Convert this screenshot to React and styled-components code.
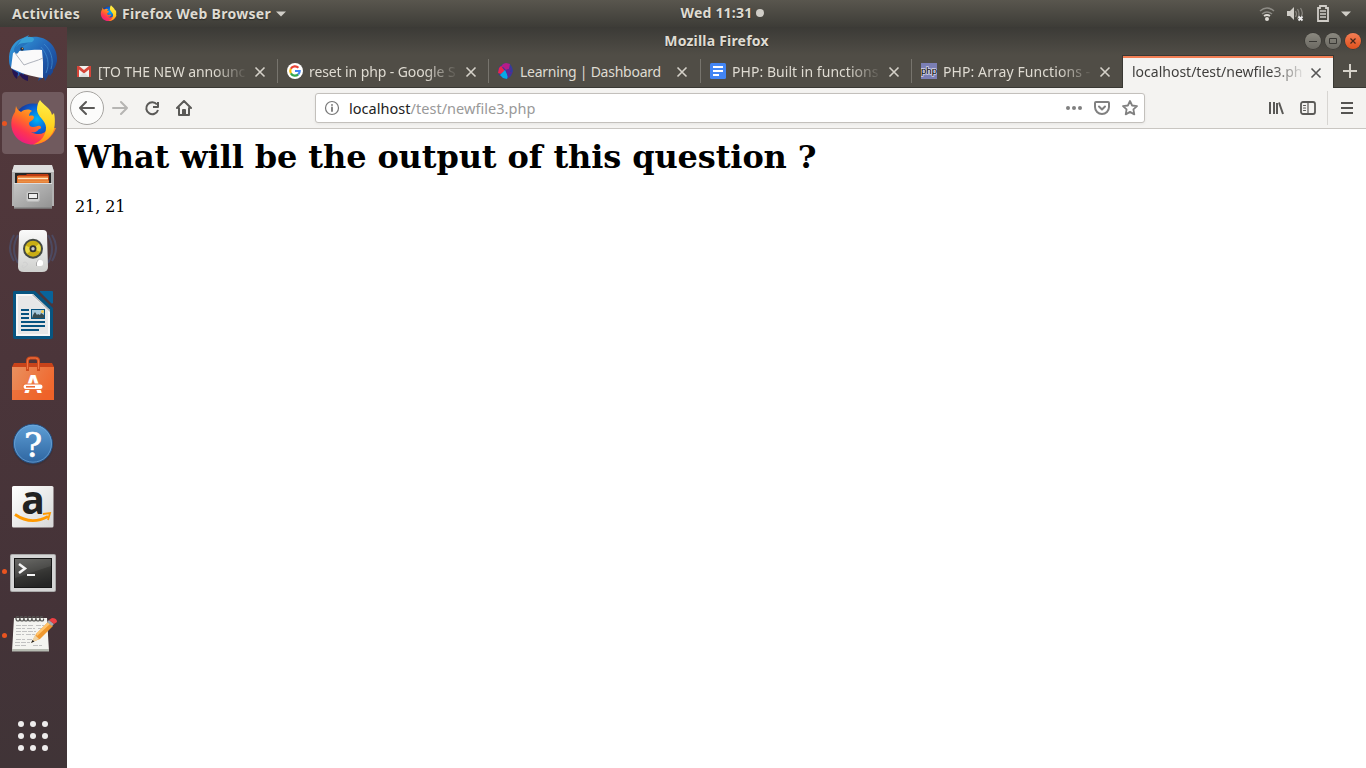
import React from "react";
import styled, { createGlobalStyle, css } from "styled-components";

const GlobalStyle = createGlobalStyle`
  * { box-sizing: border-box; }
  body { margin: 0; overflow: hidden; background: #fff; }
  svg { display: block; flex: none; }
`;

const uiFont = css`font-family: "Noto Sans", "Open Sans", sans-serif;`;

const Desktop = styled.div`
  width: 1366px;
  height: 768px;
  display: flex;
  flex-direction: column;
`;

/* ---------- system bar ---------- */
const TopBar = styled.header`
  ${uiFont}
  height: 27px;
  flex: none;
  display: grid;
  grid-template-columns: 67px 1fr auto 1fr;
  align-items: center;
  background: linear-gradient(#59564e, #3d3c37);
  color: #dfdbd2;
`;
const BarLabel = styled.span`
  font-size: 14px;
  font-weight: 700;
  line-height: 20px;
  white-space: nowrap;
  letter-spacing: ${(p) => p.$spacing || 0}px;
  text-shadow: 0 1px 1px #2a2925;
`;
const BarLeft = styled.div`
  grid-column: 1 / 3;
  display: flex;
  align-items: center;
  padding-left: 12px;
`;
const AppMenu = styled.div`
  display: flex;
  align-items: center;
  gap: 5px;
  margin-left: 20px;
`;
const Clock = styled.div`
  display: flex;
  align-items: center;
  gap: 4px;
  width: 84px;
  margin-right: -12px;
  padding-bottom: 1px;
`;
const StatusArea = styled.div`
  display: flex;
  justify-content: flex-end;
  align-items: center;
  gap: 10px;
  padding-right: 15px;
`;
const NotifyDot = styled.i`
  flex: none;
  width: 8px;
  height: 8px;
  border-radius: 50%;
  background: #d0cdc7;
`;

/* ---------- dock ---------- */
const Workspace = styled.div`
  flex: 1;
  display: flex;
  min-height: 0;
`;
const Dock = styled.nav`
  width: 67px;
  flex: none;
  display: flex;
  flex-direction: column;
  justify-content: space-between;
  background: linear-gradient(#54393c, #4b353a 45%, #443338 80%, #403437);
`;
const DockSlot = styled.div`
  height: 64px;
  display: flex;
  align-items: center;
`;
const RunningDot = styled.div`
  width: 5px;
  height: 5px;
  border-radius: 50%;
  background: ${(p) => (p.$on ? "#e95420" : "transparent")};
`;
const DockTile = styled.div`
  width: 62px;
  height: 62px;
  margin-left: 2px;
  display: flex;
  align-items: center;
  border-radius: 4px;
  background: ${(p) => (p.$active ? "#705a5e" : "transparent")};
`;
const TileDot = styled.div`
  width: 7px;
  flex: none;
`;
const AppGrid = styled.div`
  width: 66px;
  height: 64px;
  display: grid;
  grid-template-columns: repeat(3, 6px);
  gap: 6px;
  align-content: center;
  justify-content: center;
  i { width: 6px; height: 6px; border-radius: 50%; background: #eeecec; }
`;

/* ---------- browser window ---------- */
const Browser = styled.main`
  flex: 1;
  min-width: 0;
  display: flex;
  flex-direction: column;
`;
const Chrome = styled.div`
  ${uiFont}
  height: 61px;
  background: linear-gradient(#3b3a36, #504d46 28px);
  display: flex;
  flex-direction: column;
`;
const TitleBar = styled.div`
  height: 28px;
  display: grid;
  grid-template-columns: 1fr auto 1fr;
  align-items: center;
  color: #dfdbd2;
`;
const WindowButtons = styled.div`
  display: flex;
  justify-content: flex-end;
  gap: 4px;
  padding-right: 5px;
`;
const WindowButton = styled.span`
  width: 16px;
  height: 16px;
  border-radius: 50%;
  display: grid;
  place-items: center;
  background: ${(p) => (p.$close ? "linear-gradient(#f37e55,#e1511d)" : "linear-gradient(#8b8980,#6b6962)")};
  box-shadow: 0 0 0 0.5px #33322f;
`;
const TabStrip = styled.div`
  height: 33px;
  display: flex;
`;
const Tab = styled.div`
  width: ${(p) => (p.$wide ? 212 : 211)}px;
  flex: none;
  display: flex;
  align-items: center;
  border-bottom: 1px solid #393833;
  color: #dfdbd2;
  padding-left: 9px;
  ${(p) =>
    p.$active &&
    css`
      margin-left: -1px;
      width: 212px;
      border: 1px solid #393833;
      border-bottom: 0;
      background: #f4f3f1;
      color: #3f3e3c;
      box-shadow: inset 0 2px #f27e54;
    `}
`;
const TabText = styled.span`
  width: ${(p) => (p.$active ? 174 : 150)}px;
  margin-left: ${(p) => (p.$active ? 0 : 6)}px;
  padding-top: ${(p) => (p.$active ? 0 : 2)}px;
  overflow: hidden;
  white-space: nowrap;
  font-size: 14px;
  line-height: 20px;
  letter-spacing: ${(p) => p.$spacing}px;
  ${(p) => p.$fade && css`mask-image: linear-gradient(90deg, #000 calc(100% - 34px), transparent);`}
`;
const TabClose = styled.span`
  width: 12px;
  margin-left: ${(p) => (p.$active ? 4 : 6)}px;
  padding-top: 1px;
`;
const TabSeparator = styled.i`
  width: 1px;
  height: 24px;
  margin-left: auto;
  background: ${(p) => (p.$hidden ? "transparent" : "#77746d")};
`;
const NewTab = styled.div`
  flex: 1;
  display: grid;
  place-items: center;
  border-bottom: 1px solid #393833;
`;
const Toolbar = styled.div`
  height: 41px;
  flex: none;
  display: flex;
  align-items: center;
  background: #f4f3f1;
  border-bottom: 1px solid #c9c6c2;
  padding-left: 3px;
`;
const ToolButton = styled.span`
  width: 32px;
  height: 34px;
  display: grid;
  place-items: center;
`;
const BackButton = styled.span`
  width: 34px;
  height: 34px;
  border: 1px solid #a6a4a1;
  border-radius: 50%;
  display: grid;
  place-items: center;
  background: #fcfcfb;
`;
const UrlBar = styled.div`
  ${uiFont}
  width: 830px;
  height: 30px;
  margin-left: 115px;
  display: flex;
  align-items: center;
  border: 1px solid #c3c0bc;
  border-radius: 3px;
  background: #fff;
  box-shadow: 0 1px 3px rgba(0, 0, 0, 0.06);
  padding: 0 6px 0 8px;
`;
const Url = styled.span`
  margin-left: 9px;
  font-size: 14.5px;
  line-height: 20px;
  letter-spacing: 0.03px;
  color: #999;
  b { font-weight: 400; color: #222; }
`;
const UrlActions = styled.div`
  margin-left: auto;
  display: flex;
  align-items: center;
  gap: 11px;
  svg:last-child { margin-left: 1px; }
`;
const RightTools = styled.div`
  margin-left: auto;
  display: flex;
  align-items: center;
`;
const MenuButton = styled.span`
  width: 39px;
  height: 34px;
  margin-left: 3px;
  border-left: 1px solid #d7d5d2;
  display: grid;
  place-items: center;
`;
const Page = styled.article`
  flex: 1;
  background: #fff;
  padding: 9px 8px 8px;
  font-family: "DejaVu Serif", serif;
  font-size: 16px;
  line-height: 19px;
  letter-spacing: -0.1px;
  color: #000;
`;
const Heading = styled.h1`
  margin: 0 0 21.44px;
  font-size: 32px;
  line-height: 38px;
  font-weight: 700;
  letter-spacing: -0.12px;
`;

/* ---------- icons ---------- */
const Firefox = ({ size = 48, id = "a" }) => (
  <svg width={size} height={size} viewBox="0 0 48 48">
    <defs>
      <linearGradient id={`fo${id}`} x1=".8" y1=".1" x2=".2" y2="1">
        <stop offset="0" stopColor="#ffbd2e" /><stop offset=".4" stopColor="#ff7a20" />
        <stop offset=".7" stopColor="#ff3550" /><stop offset="1" stopColor="#e8168c" />
      </linearGradient>
      <linearGradient id={`fy${id}`} x1=".5" y1="0" x2=".4" y2="1">
        <stop offset="0" stopColor="#fff04a" /><stop offset=".55" stopColor="#ffd21f" /><stop offset="1" stopColor="#ff8618" />
      </linearGradient>
      <radialGradient id={`fb${id}`} cx=".6" cy=".4"><stop offset="0" stopColor="#00b7f5" /><stop offset=".55" stopColor="#0669dd" /><stop offset="1" stopColor="#183a9d" /></radialGradient>
    </defs>
    <circle cx="24" cy="24" r="19.5" fill={`url(#fb${id})`} />
    <path d="M7 7C8 10 9 11 12 13c4-3 8-3 11-1-2 1-3 3-3 5 3-1 5 0 5 1 0 3-4 4-5 6 0 3 2 4 4 4 3 0 5-2 7-1 2 1 1 3-1 3-2 3-5 4-8 3 7 4 14 2 18-4l7 0C44 37 36 45.500 24 45.500 11 45.500 2 36 2.300 24 2.500 19 4 16 6 13z" fill={`url(#fo${id})`} />
    <path d="M31 1C33 5 42 9 43 16l2-2c1 4 1 8 .7 12C45 37 36 45 24 45.500c8-3 13-9 13-17 0-7-9-11-9-18 0-4 1-7 3-9.500z" fill={`url(#fy${id})`} />
  </svg>
);

const Thunderbird = () => (
  <svg width="48" height="48" viewBox="0 0 48 48">
    <defs><linearGradient id="tb" x1="0" y1="0" x2="1" y2="1"><stop stopColor="#38a9e2" /><stop offset=".5" stopColor="#2365b8" /><stop offset="1" stopColor="#173982" /></linearGradient></defs>
    <path d="M0 26C-1 14 6 5 14 3l6-3-2 3C35-2 49 10 48 26c-1 4-2 7-4 9l0 2-3 4-1-2-4 7-1-4-6 4 3-9-16 1-3 4 0-4-5 4 1-4C5 38 0 32 0 26z" fill="url(#tb)" />
    <path d="M3 34l6 4-1 6c-3-2-5-6-5-10zm7 4 9 3 0 5c-4-1-8-4-9-8z" fill="#241555" />
    <path d="M4 18 8 16c5 0 18-2 25-1l1 12 0 16C23 42 9 37 2 33z" fill="#fafafa" />
    <path d="m6 18 9 12c7-3 13-4 19-7" fill="none" stroke="#aeb2bb" />
    <path d="M5 14C9 5 16 2 25 4L13 12 9 18c-2 2-4-1-4-4z" fill="#2674bd" />
    <path d="M13 4C20-1 29 3 23 7l-8 1C9 8 8 12 7 12z" fill="#39a0d6" />
    <circle cx="13" cy="14" r="1.800" fill="#202d48" /><circle cx="13.500" cy="13.500" r=".7" fill="#d69843" />
    <path d="M35 9c7 6 10 16 7 25M32 12c7 8 9 17 5 26" fill="none" stroke="#408bcd" strokeWidth=".8" />
  </svg>
);

const Files = () => (
  <svg width="48" height="48" viewBox="0 0 48 48">
    <defs><linearGradient id="fi" x1="0" y1="0" x2="1" y2="1"><stop stopColor="#c5c5c5" /><stop offset="1" stopColor="#929292" /></linearGradient></defs>
    <path d="M5 3h38l2 5v35H3V8z" fill="#b2b2b2" /><path d="M5 2h38l2 7H3z" fill="#dedede" />
    <path d="M6 10h36v10H6z" fill="#272727" />
    <path d="M8 20v-7l2-1h7l1-1h21l1 2v7z" fill="#bd3b13" /><path d="M8 13h31v7H8z" fill="#e5702b" />
    <path d="M9 15.500h30" stroke="#ffe6c0" strokeWidth="1.500" /><path d="M9 18.500h31" stroke="#e99046" strokeWidth="2" />
    <path d="M5 20h38v25.500H5z" fill="url(#fi)" /><path d="M5 20.500h38" stroke="#ddd" />
    <path d="M5 45h38" stroke="#777" />
    <rect x="17.500" y="28.500" width="13" height="10" rx="2" fill="#d0d0d0" stroke="#bababa" /><rect x="19.500" y="30.500" width="9" height="5" fill="#eee" stroke="#444" />
  </svg>
);

const Speaker = () => (
  <svg width="48" height="48" viewBox="0 0 48 48">
    <defs><linearGradient id="sp" x2="0" y2="1"><stop stopColor="#fafafa" /><stop offset="1" stopColor="#cfd0ce" /></linearGradient></defs>
    <g fill="none" stroke="#4c5a80" strokeWidth="2" opacity=".55"><path d="M5 8Q-3 21 5 34M9 8Q1 22 9 36" /><path d="M43 8Q51 21 43 34M39 8Q47 22 39 36" /></g>
    <path d="M14 3h20q4 0 4 4l1 33q0 5-6 5H15q-6 0-6-5l1-33q0-4 4-4z" fill="url(#sp)" />
    <circle cx="24" cy="21.700" r="10" fill="#444944" /><circle cx="24" cy="21.700" r="8" fill="#c9ad14" />
    <path d="m24 21.700-6 5a8 8 0 0 1-1-8zm0 0 6-5a8 8 0 0 1 1 8z" fill="#eada46" /><circle cx="24" cy="21.700" r="3.500" fill="#333" /><circle cx="24" cy="21.700" r="1.700" fill="#ccc" />
    <rect x="27" y="33" width="7" height="6" rx="2.500" fill="#fff" /><path d="M27.500 39v-3q0-2 2-3" fill="none" stroke="#aaa" /><path d="M14 36q2-2 4 0t-2 4-2-2" fill="none" stroke="#d0d0d0" />
  </svg>
);

const Writer = () => (
  <svg width="48" height="48" viewBox="0 0 48 48">
    <path d="M5 0h21l18 17v29q0 2-2 2H6q-2 0-2-2V2q0-2 1-2z" fill="#075581" />
    <path d="M31 0h12q1 0 1 1v11q-1 1-2 0L31 1z" fill="#08639a" />
    <path d="M7 3h17l17 16v26H7z" fill="#f7f7f7" /><path d="M9 5h14l16 15v23H9z" fill="#e7e7e7" /><path d="m24 3 17 16v2L23 4z" fill="#b9babb" />
    <path d="M12 19h8M12 23h8M12 27h8M12 31h24M12 35h24M12 39h18" stroke="#075380" strokeWidth="2" />
    <rect x="22.500" y="18.500" width="13" height="9" fill="#a8c9dc" stroke="#075380" /><path d="m23 27 1-3 2-3 2 3 1-1 2 1 1-2 3 2v3z" fill="#394c50" /><circle cx="33.500" cy="20.500" r="1.500" fill="#f8cc4e" />
  </svg>
);

const Software = () => (
  <svg width="48" height="48" viewBox="0 0 48 48">
    <defs><linearGradient id="bag" x2="1" y2=".4"><stop stopColor="#e9905f" /><stop offset="1" stopColor="#f0692f" /></linearGradient></defs>
    <path d="M5 8h38l2 4v33H3V12z" fill="#c8431a" /><path d="M3 12h42v33H3z" fill="url(#bag)" /><path d="M3 35h42v10H3z" fill="#ee5c22" opacity=".45" />
    <path d="M18.500 16V6q0-3 3-3h5q3 0 3 3v10" fill="none" stroke="#cf4b1c" strokeWidth="3" /><path d="M18.500 14V6q0-3 3-3h5q3 0 3 3v8" fill="none" stroke="#ef7343" />
    <text x="24" y="38" textAnchor="middle" fontFamily="Open Sans, sans-serif" fontWeight="700" fontSize="25" fill="#fff">A</text>
    <rect x="13.500" y="28.500" width="21" height="6.500" rx="3.200" fill="#ee743c" /><rect x="14.500" y="29.500" width="19" height="4.500" rx="2.200" fill="#fff" /><path d="M17 31.800h9" stroke="#ed642d" strokeWidth="1.500" />
  </svg>
);

const Help = () => (
  <svg width="48" height="48" viewBox="0 0 48 48">
    <defs><linearGradient id="hp" x2="0" y2="1"><stop stopColor="#5e9fd6" /><stop offset="1" stopColor="#2e65a0" /></linearGradient></defs>
    <circle cx="24" cy="26" r="20.500" fill="#302c38" opacity=".4" /><circle cx="24" cy="24.700" r="19.500" fill="url(#hp)" stroke="#244f82" /><circle cx="24" cy="24.700" r="18.500" fill="none" stroke="#79afe0" opacity=".6" />
    <text x="24" y="38" textAnchor="middle" fontFamily="DejaVu Serif, serif" fontSize="34" stroke="#fff" strokeWidth=".6" fill="#fff">?</text>
  </svg>
);

const Amazon = () => (
  <svg width="48" height="48" viewBox="0 0 48 48">
    <defs><linearGradient id="am" x2="1" y2="1"><stop stopColor="#fff" /><stop offset="1" stopColor="#d7d7d7" /></linearGradient></defs>
    <rect x="3" y="3" width="41.500" height="41.500" rx="1.500" fill="url(#am)" />
    <text x="24" y="30.500" textAnchor="middle" fontFamily="Open Sans, sans-serif" fontWeight="700" fontSize="39" fill="#222">a</text>
    <path d="M6 31.500q16 11 33 2" fill="none" stroke="#ff9900" strokeWidth="2.800" /><path d="m34 31 7-1-2 7" fill="none" stroke="#ff9900" strokeWidth="1.800" />
  </svg>
);

const Terminal = () => (
  <svg width="48" height="48" viewBox="0 0 48 48">
    <defs><linearGradient id="tm" x1=".2" x2=".5" y2="1"><stop stopColor="#5b5b58" /><stop offset=".6" stopColor="#353533" /><stop offset="1" stopColor="#252525" /></linearGradient></defs>
    <rect x="1" y="7" width="46" height="38" rx="2" fill="#aaa" /><rect x="2" y="8" width="44" height="36" rx="1" fill="#d5d5d5" /><rect x="5" y="11" width="38" height="30" fill="#171717" /><path d="M6 12h36v28H6z" fill="url(#tm)" /><path d="M6 12h36v7L6 31z" fill="#fff" opacity=".07" />
    <path d="m10 17 6 4.500-6 4.500" fill="none" stroke="#f5f5f5" strokeWidth="2.500" /><path d="M18 28h8" stroke="#f5f5f5" strokeWidth="2" />
  </svg>
);

const Editor = () => (
  <svg width="48" height="48" viewBox="0 0 48 48">
    <path d="M5 7h33l2 33H3z" fill="#f4f4f0" /><path d="M3 38h37v2.500H3z" fill="#b6bab1" />
    {[9, 13, 17, 21, 25, 29, 33].map((x) => <path key={x} d={`M${x + 1} 6q-3-1-3 1.500t2 2.500 1.500-2.500`} fill="none" stroke="#555552" strokeWidth="1.200" />)}
    <path d="M7 14.500h17m3 0h8M7 17.500h9m2 0h8m3 0h5M7 20.500h20M7 23.500h8m2 0h9M7 28.500h9m2 0h8M6 31.500h15M6 34.500h12m6 0h9" stroke="#bbb" strokeWidth=".9" strokeDasharray="5 1" />
    <path d="m23 31 4-8L39 11l5 4-13 13z" fill="#ef982e" /><path d="m27 23 12-12 2 2-13 12z" fill="#ffc46d" /><path d="m22 32 4-8 4 4z" fill="#efd2a1" /><path d="m22 32 1.500-3 2 1.500z" fill="#222" /><path d="m38 11 2-2 5 4-2 2z" fill="#a3a9ae" /><path d="m40 9 3-2q5 0 5 4l-3 2z" fill="#ed4044" />
  </svg>
);

const Svg16 = ({ children, size = 16, color = "#5a5957", width = 2 }) => (
  <svg width={size} height={size} viewBox="0 0 16 16" fill="none" stroke={color} strokeWidth={width} strokeLinecap="round" strokeLinejoin="round">{children}</svg>
);
const CloseIcon = ({ color }) => (
  <svg width="12" height="12" viewBox="0 0 12 12"><path d="m1.500 1.500 9 9m0-9-9 9" stroke={color} strokeWidth="1.600" /></svg>
);
const Caret = () => <svg width="10" height="6" viewBox="0 0 10 6"><path d="M0 .5h10L5 5.500z" fill="#d0cdc7" /></svg>;

const favicons = {
  gmail: <svg width="16" height="16" viewBox="0 0 16 16"><path d="M1 3h14v11H1z" fill="#f1f0ee" /><path d="M1 14V3h2l5 4 5-4h2v11h-2V6.500l-5 4-5-4V14z" fill="#d54539" /><path d="m3 14 4-4 1 1 1-1 4 4z" fill="#ddd" /></svg>,
  google: <svg width="16" height="16" viewBox="0 0 16 16"><circle cx="8" cy="8" r="8" fill="#fff" /><g fill="none" strokeWidth="2.200"><path d="M3.800 5.800A4.700 4.700 0 0 1 11.400 4.800" stroke="#ea4335" /><path d="M3.900 10.400a4.700 4.700 0 0 1-.1-4.600" stroke="#fbbc05" /><path d="M11.200 11.400a4.700 4.700 0 0 1-7.300-1" stroke="#34a853" /><path d="M8 8h4.700q0 2-1.500 3.400" stroke="#4285f4" /></g></svg>,
  learning: <svg width="16" height="16" viewBox="0 0 16 16"><path d="M5 1l3-1 4 1 2 3 1 4-2 5-4 3-4-1-4-3-1-4 1-4z" fill="#343b9d" /><path d="M5 1l3-1 4 1-1 5-3 1-3-3-3 1z" fill="#b51c88" /><path d="m1 5 2-2 4 5-4 3-3-1z" fill="#ed244c" /><path d="m7 7 3 6-1 3-4-1-3-3z" fill="#06a9e7" /><path d="m8 7 5-2-1 4 3 1-4 1 1 2-2 2" fill="#632494" /></svg>,
  docs: <svg width="16" height="16" viewBox="0 0 16 16"><rect width="16" height="16" rx="1.500" fill="#4285f4" /><path d="M3 4h10M3 8h10M3 12h6" stroke="#fff" strokeWidth="2" /></svg>,
  php: <svg width="16" height="16" viewBox="0 0 16 16"><path d="M0 0h16v16H0z" fill="#7b7fb5" /><text x="8" y="11" textAnchor="middle" fontFamily="Liberation Sans, sans-serif" fontSize="9.5" stroke="#d5d5e6" strokeWidth="1.600" style={{ paintOrder: "stroke" }} fill="#000">php</text></svg>,
};

const tabs = [
  { icon: "gmail", title: "[TO THE NEW announc", spacing: -0.1, fade: true },
  { icon: "google", title: "reset in php - Google S", spacing: -0.1, fade: true },
  { icon: "learning", title: "Learning | Dashboard", spacing: -0.25, wide: true },
  { icon: "docs", title: "PHP: Built in functions", spacing: 0.04, fade: true },
  { icon: "php", title: "PHP: Array Functions -", spacing: 0.08, fade: true },
  { title: "localhost/test/newfile3.ph", spacing: 0, active: true, fade: true },
];

const apps = [
  { name: "thunderbird", icon: <Thunderbird /> },
  { name: "firefox", icon: <Firefox />, active: true, running: true },
  { name: "files", icon: <Files /> },
  { name: "music", icon: <Speaker /> },
  { name: "writer", icon: <Writer /> },
  { name: "software", icon: <Software /> },
  { name: "help", icon: <Help /> },
  { name: "amazon", icon: <Amazon /> },
  { name: "terminal", icon: <Terminal />, running: true },
  { name: "editor", icon: <Editor />, running: true },
];

export default function App() {
  return (
    <Desktop>
      <GlobalStyle />
      <TopBar>
        <BarLeft>
          <BarLabel $spacing={0.3}>Activities</BarLabel>
          <AppMenu>
            <Firefox size={17} id="m" />
            <BarLabel $spacing={0.3}>Firefox Web Browser</BarLabel>
            <Caret />
          </AppMenu>
        </BarLeft>
        <Clock><BarLabel $spacing={0.2}>Wed 11:31</BarLabel><NotifyDot /></Clock>
        <StatusArea>
          <svg width="16" height="16" viewBox="0 0 16 16" fill="none"><path d="M1 5q7-6 14 0M3 8q5-4 10 0" stroke="#8d8b85" strokeWidth="1.500" /><path d="M5 10q3-2 6 0" stroke="#dedbd5" strokeWidth="1.800" /><circle cx="8" cy="13" r="2" fill="#dedbd5" /></svg>
          <svg width="20" height="16" viewBox="0 0 20 16" fill="none"><path d="M2 5h3l4-4v13l-4-4H2z" fill="#d0cdc7" /><path d="M10.500 5q2 3 0 6m2-8q3 5 0 10m3-11q3 5 1 8" stroke="#85827c" strokeWidth="1.300" /><path d="m13.500 10.500 4 4m0-4-4 4" stroke="#eee" strokeWidth="1.800" /></svg>
          <svg width="16" height="17" viewBox="0 0 16 17" fill="none"><path d="M3 3h2V1h6v2h2v13H3z" stroke="#d0cdc7" strokeWidth="1.800" /><path d="M5 6h6M5 9h6M5 12h6" stroke="#d0cdc7" strokeWidth="1.500" /></svg>
          <Caret />
        </StatusArea>
      </TopBar>
      <Workspace>
        <Dock>
          <div>
            {apps.map((app) => (
              <DockSlot key={app.name}>
                <DockTile $active={app.active}>
                  <TileDot><RunningDot $on={app.running} /></TileDot>
                  {app.icon}
                </DockTile>
              </DockSlot>
            ))}
          </div>
          <AppGrid>{Array.from({ length: 9 }, (_, i) => <i key={i} />)}</AppGrid>
        </Dock>
        <Browser>
          <Chrome>
            <TitleBar>
              <span />
              <BarLabel $spacing={0.2}>Mozilla Firefox</BarLabel>
              <WindowButtons>
                <WindowButton><svg width="8" height="8"><path d="M0 4.500h8" stroke="#3a3935" /></svg></WindowButton>
                <WindowButton><svg width="8" height="8"><path d="M.5 1.500h7v5h-7z" fill="none" stroke="#3a3935" /></svg></WindowButton>
                <WindowButton $close><svg width="8" height="8"><path d="m1.500 1.500 5 5m0-5-5 5" stroke="#45261a" strokeWidth="1.200" /></svg></WindowButton>
              </WindowButtons>
            </TitleBar>
            <TabStrip>
              {tabs.map((t, i) => (
                <Tab key={t.title} $active={t.active} $wide={t.wide}>
                  {t.icon && favicons[t.icon]}
                  <TabText $active={t.active} $spacing={t.spacing} $fade={t.fade}>{t.title}</TabText>
                  <TabClose $active={t.active}><CloseIcon color={t.active ? "#555" : "#d5d1c9"} /></TabClose>
                  <TabSeparator $hidden={i > 3} />
                </Tab>
              ))}
              <NewTab><svg width="14" height="14"><path d="M7 0v14M0 7h14" stroke="#d5d1c9" strokeWidth="2" /></svg></NewTab>
            </TabStrip>
          </Chrome>
          <Toolbar>
            <BackButton><Svg16><path d="M15 8H1m6-6L1 8l6 6" /></Svg16></BackButton>
            <ToolButton><Svg16 color="#b6b5b3"><path d="M1 8h14M9 2l6 6-6 6" /></Svg16></ToolButton>
            <ToolButton><Svg16><path d="M13 4.500A6 6 0 1 0 14 10M14 2v5H9" strokeLinecap="butt" /></Svg16></ToolButton>
            <ToolButton><Svg16><path d="m1 8 7-7 7 7M3 8v7h10V8" /><path d="M7 14v-4h2v4" strokeLinecap="butt" /></Svg16></ToolButton>
            <UrlBar>
              <Svg16 color="#777" width={1.2}><circle cx="8" cy="8" r="6.500" /><path d="M8 7.500v3.500M8 4.800v.2" strokeWidth="1.800" /></Svg16>
              <Url><b>localhost</b>/test/newfile3.php</Url>
              <UrlActions>
                <svg width="18" height="16" viewBox="0 0 18 16" fill="#808080"><circle cx="3" cy="8" r="2" /><circle cx="9" cy="8" r="2" /><circle cx="15" cy="8" r="2" /></svg>
                <Svg16 color="#808080"><path d="M2 2h12q1 0 1 1v4a7 7 0 0 1-14 0V3q0-1 1-1zM5 6.500l3 3 3-3" /></Svg16>
                <Svg16 color="#808080" width={1.8}><path d="m8 1 2.100 4.500 4.900.6-3.600 3.300.9 5-4.300-2.500-4.300 2.500.9-5L1 6.100l4.900-.6z" /></Svg16>
              </UrlActions>
            </UrlBar>
            <RightTools>
              <ToolButton><Svg16><path d="M2 2v12M6 2v12M9 3v11M11 2.500 15 14" strokeLinecap="butt" /></Svg16></ToolButton>
              <ToolButton><Svg16 width={1.8}><rect x="1" y="2" width="14" height="12" rx="2" /><path d="M8 2v12M3.500 5.500h2M3.500 8h2M3.500 10.500h2" strokeWidth="1.200" /></Svg16></ToolButton>
              <MenuButton><svg width="12" height="14"><path d="M0 2h12M0 7h12M0 12h12" stroke="#555452" strokeWidth="2" /></svg></MenuButton>
            </RightTools>
          </Toolbar>
          <Page>
            <Heading>What will be the output of this question ?</Heading>
            <div>21, 21</div>
          </Page>
        </Browser>
      </Workspace>
    </Desktop>
  );
}
